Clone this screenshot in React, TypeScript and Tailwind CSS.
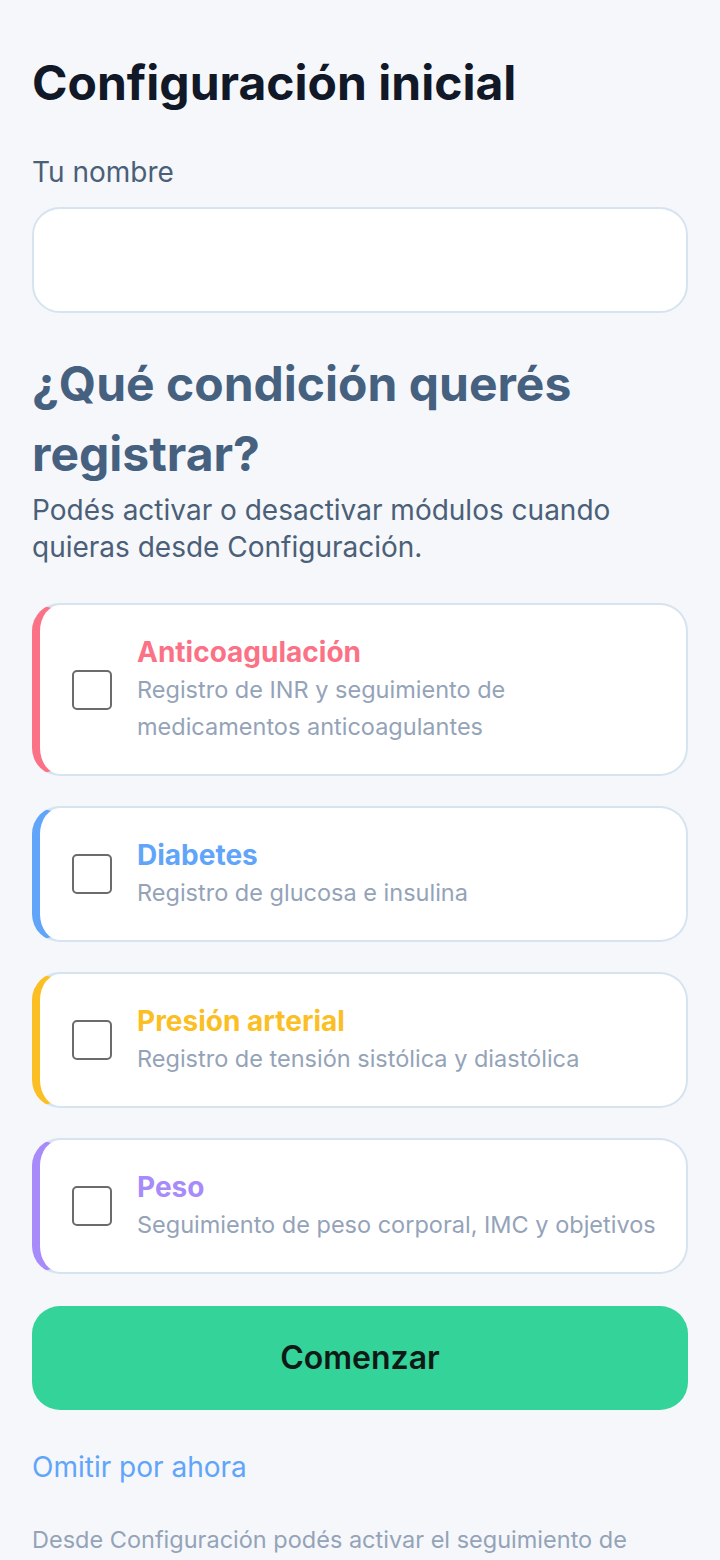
import React, { useState } from 'react';

interface Module {
  id: string;
  title: string;
  description: string;
  text: string;
  border: string;
}

const modules: Module[] = [
  {
    id: 'inr',
    title: 'Anticoagulación',
    description: 'Registro de INR y seguimiento de medicamentos anticoagulantes',
    text: 'text-[#fb7185]',
    border: 'border-l-[#fb7185]',
  },
  {
    id: 'diabetes',
    title: 'Diabetes',
    description: 'Registro de glucosa e insulina',
    text: 'text-[#60a5fa]',
    border: 'border-l-[#60a5fa]',
  },
  {
    id: 'bp',
    title: 'Presión arterial',
    description: 'Registro de tensión sistólica y diastólica',
    text: 'text-[#fbbf24]',
    border: 'border-l-[#fbbf24]',
  },
  {
    id: 'weight',
    title: 'Peso',
    description: 'Seguimiento de peso corporal, IMC y objetivos',
    text: 'text-[#a78bfa]',
    border: 'border-l-[#a78bfa]',
  },
];

const ModuleCard: React.FC<{ module: Module; checked: boolean; onToggle: () => void }> = ({ module, checked, onToggle }) => (
  <label
    className={`flex items-center gap-[25px] rounded-[28px] border-2 border-[#d6e3f0] border-l-8 ${module.border} bg-white pl-8 pr-6 py-[29px] cursor-pointer`}
  >
    <span className="w-10 h-10 shrink-0 rounded-[5px] border-2 border-[#6b6b6b] bg-white flex items-center justify-center">
      <input type="checkbox" className="sr-only" checked={checked} onChange={onToggle} />
      {checked && (
        <svg className="w-7 h-7 text-[#6b6b6b]" fill="none" stroke="currentColor" viewBox="0 0 24 24">
          <path strokeLinecap="round" strokeLinejoin="round" strokeWidth={3} d="M5 13l4 4L19 7" />
        </svg>
      )}
    </span>
    <div className="flex flex-col">
      <span className={`text-[28px] leading-[37px] font-bold ${module.text}`}>{module.title}</span>
      <span className="text-[23.5px] leading-[37px] text-[#94a3b8]">{module.description}</span>
    </div>
  </label>
);

export default function App() {
  const [name, setName] = useState('');
  const [selected, setSelected] = useState<Record<string, boolean>>({});

  const toggle = (id: string) => setSelected((s) => ({ ...s, [id]: !s[id] }));

  return (
    <div className="min-h-[1560px] bg-[#f5f7fa] px-8 pt-[53px] font-['Inter',sans-serif]">
      <h1 className="text-[48px] leading-[60px] font-bold text-[#111827]">Configuración inicial</h1>

      <label className="block mt-[41px] text-[28px] leading-[36px] text-[#4b5f78]">Tu nombre</label>
      <input
        value={name}
        onChange={(e) => setName(e.target.value)}
        className="mt-[17px] block w-full h-[106px] rounded-[28px] border-2 border-[#d6e3f0] bg-white px-7 text-[28px] text-[#111827] outline-none"
      />

      <h2 className="mt-[36px] text-[48px] leading-[70px] font-bold text-[#46617f]">¿Qué condición querés registrar?</h2>
      <p className="mt-[3px] text-[28px] leading-[37px] text-[#4b5f78]">
        Podés activar o desactivar módulos cuando quieras desde Configuración.
      </p>

      <div className="mt-[37px] flex flex-col gap-[30px]">
        {modules.map((m) => (
          <ModuleCard key={m.id} module={m} checked={!!selected[m.id]} onToggle={() => toggle(m.id)} />
        ))}
      </div>

      <button className="mt-[32px] w-full h-[104px] rounded-[28px] bg-[#34d399] text-[32px] font-semibold text-[#0f1a17]">
        Comenzar
      </button>

      <button className="mt-[37px] block text-[28px] leading-[40px] text-[#60a5fa]">Omitir por ahora</button>

      <p className="mt-[34px] text-[23.5px] leading-[37px] text-[#94a3b8]">
        Desde Configuración podés activar el seguimiento de otras condiciones en cualquier momento.
      </p>
    </div>
  );
}
